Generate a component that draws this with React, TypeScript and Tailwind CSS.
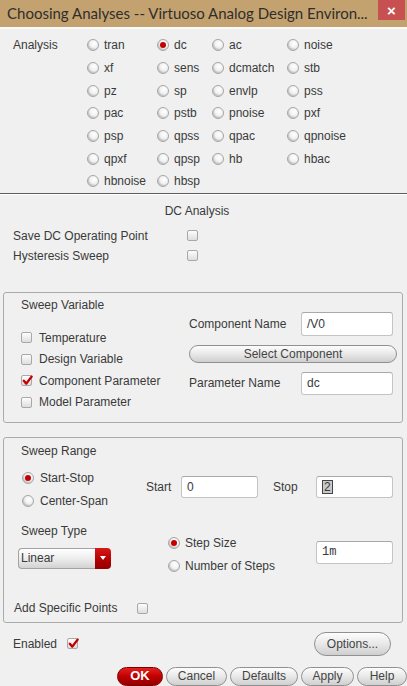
import React from 'react'

const analyses = [
  ['tran', 'dc', 'ac', 'noise'],
  ['xf', 'sens', 'dcmatch', 'stb'],
  ['pz', 'sp', 'envlp', 'pss'],
  ['pac', 'pstb', 'pnoise', 'pxf'],
  ['psp', 'qpss', 'qpac', 'qpnoise'],
  ['qpxf', 'qpsp', 'hb', 'hbac'],
  ['hbnoise', 'hbsp'],
]

function Radio({ on }: { on?: boolean }) {
  return (
    <span className="flex h-[12px] w-[12px] shrink-0 items-center justify-center rounded-full border border-[#a6a6a6] bg-[radial-gradient(circle_at_60%_35%,#ffffff_0%,#f1f1f1_45%,#c8c8c8_100%)] shadow-[inset_1px_-1px_1px_rgba(0,0,0,0.12)]">
      {on && <span className="h-[6px] w-[6px] rounded-full bg-[#c30000]" />}
    </span>
  )
}

function Check({ on }: { on?: boolean }) {
  return (
    <span className="relative flex h-[11px] w-[11px] shrink-0 items-center justify-center rounded-[2px] border border-[#a8a8a8] bg-[linear-gradient(#fdfdfd,#dedede)]">
      {on && (
        <svg width="11" height="11" viewBox="0 0 11 11" className="absolute left-[0px] top-[-1px]">
          <path d="M1.8 5.8 L4.3 8.6 L9.6 1.6" fill="none" stroke="#c40000" strokeWidth="2.4" strokeLinecap="round" strokeLinejoin="round" />
        </svg>
      )}
    </span>
  )
}

function Field({ w, h, children, mono }: { w: string; h: string; children?: React.ReactNode; mono?: boolean }) {
  return (
    <div className={`${w} ${h} flex items-center rounded-[3px] border border-[#c4c4c4] border-t-[#a9a9a9] bg-white pl-[5px] ${mono ? "font-['Liberation_Mono',monospace] text-[12px]" : ''}`}>
      {children}
    </div>
  )
}

function Pill({ w, h, children }: { w: string; h: string; children: React.ReactNode }) {
  return (
    <div className={`${w} ${h} flex items-center justify-center rounded-full border border-[#909090] bg-[linear-gradient(#fdfdfd,#e8e8e8_50%,#cfcfcf)] text-[12px] text-[#444]`}>
      {children}
    </div>
  )
}

export default function App() {
  return (
    <div className="h-[686px] w-[407px] overflow-hidden bg-[#f0f0f0] font-['Liberation_Sans',Arial,sans-serif] text-[12px] leading-[18px] text-[#3a3a3a]">
      {/* title bar */}
      <div className="flex h-[27px] items-start justify-between bg-[#c4a26f]">
        <div className="whitespace-nowrap pl-[7px] pt-[3px] font-['Lato',sans-serif] text-[15px] leading-[20px] text-[#2e2e2e]">
          Choosing Analyses -- Virtuoso Analog Design Environ...
        </div>
        <div className="mr-[2px] flex h-[20px] w-[27px] shrink-0 items-center justify-center bg-[#c75050] text-[15px] font-bold leading-none text-white">
          ×
        </div>
      </div>
      <div className="h-[2px] bg-[#fafafa]" />

      {/* analysis choices */}
      <div className="flex border-b border-[#5f5f5f] pt-[5px]">
        <div className="w-[87px] pl-[13px] leading-[22.7px]">Analysis</div>
        <div className="grid grid-cols-[70px_55px_75px_1fr]">
          {analyses.flatMap((row, r) =>
            row.map((a) => (
              <div key={r + a} className="flex h-[22.7px] items-center gap-[5px]">
                <Radio on={a === 'dc'} />
                <span>{a}</span>
              </div>
            ))
          )}
        </div>
      </div>
      <div className="h-px bg-white" />

      {/* DC analysis options */}
      <div className="mt-[7px] flex h-[18px] items-center justify-center pr-[13px]">DC Analysis</div>
      <div className="mt-[6px] pl-[13px]">
        <div className="flex h-[20px] items-center">
          <span className="w-[174px]">Save DC Operating Point</span>
          <Check />
        </div>
        <div className="flex h-[20px] items-center">
          <span className="w-[174px]">Hysteresis Sweep</span>
          <Check />
        </div>
      </div>

      {/* sweep variable */}
      <div className="ml-[3px] mt-[26px] flex h-[131px] w-[400px] rounded-[3px] border border-[#ababab]">
        <div className="w-[185px] pl-[17px]">
          <div className="mt-[3px] h-[18px]">Sweep Variable</div>
          <div className="mt-[13px]">
            {['Temperature', 'Design Variable', 'Component Parameter', 'Model Parameter'].map((t) => (
              <div key={t} className="flex h-[21.5px] items-center gap-[7px]">
                <Check on={t === 'Component Parameter'} />
                <span>{t}</span>
              </div>
            ))}
          </div>
        </div>
        <div className="pt-[19px]">
          <div className="flex items-center">
            <span className="w-[112px]">Component Name</span>
            <Field w="w-[92px]" h="h-[24px]">/V0</Field>
          </div>
          <div className="mt-[9px]">
            <Pill w="w-[208px]" h="h-[18px]">Select Component</Pill>
          </div>
          <div className="mt-[9px] flex items-center">
            <span className="w-[112px]">Parameter Name</span>
            <Field w="w-[92px]" h="h-[23px]">dc</Field>
          </div>
        </div>
      </div>

      {/* sweep range */}
      <div className="ml-[3px] mt-[14px] h-[186px] w-[400px] rounded-[3px] border border-[#ababab]">
        <div className="mt-[4px] h-[18px] pl-[17px]">Sweep Range</div>
        <div className="mt-[7px] flex">
          <div className="w-[142px] pl-[18px]">
            <div className="flex h-[23px] items-center gap-[6px]">
              <Radio on />
              <span>Start-Stop</span>
            </div>
            <div className="flex h-[23px] items-center gap-[6px]">
              <Radio />
              <span>Center-Span</span>
            </div>
          </div>
          <div className="mt-[9px] flex h-[22px] items-center">
            <span className="w-[35px]">Start</span>
            <Field w="w-[77px]" h="h-[22px]">0</Field>
            <span className="ml-[15px] w-[43px]">Stop</span>
            <Field w="w-[77px]" h="h-[22px]">
              <span className="border border-[#444] bg-[#c9c9c9] px-[1px] leading-[12px]">2</span>
            </Field>
          </div>
        </div>
        <div className="mt-[9px] flex">
          <div className="w-[164px] pl-[14px]">
            <div className="h-[18px] pl-[3px]">Sweep Type</div>
            <div className="mt-[8px] flex h-[21px] w-[93px]">
              <div className="flex flex-1 items-center rounded-l-[4px] border border-r-0 border-[#a3a3a3] bg-[linear-gradient(#ffffff,#ebebeb_55%,#d2d2d2)] pl-[2px]">Linear</div>
              <div className="flex w-[16px] items-center justify-center rounded-r-[4px] bg-[linear-gradient(#d81818,#b00000_60%,#900000)]">
                <span className="h-0 w-0 border-x-[3.5px] border-t-[4px] border-x-transparent border-t-white" />
              </div>
            </div>
          </div>
          <div className="w-[148px] pt-[9.5px]">
            <div className="flex h-[23px] items-center gap-[5px]">
              <Radio on />
              <span>Step Size</span>
            </div>
            <div className="flex h-[23px] items-center gap-[5px]">
              <Radio />
              <span>Number of Steps</span>
            </div>
          </div>
          <div className="mt-[19px]">
            <Field w="w-[77px]" h="h-[23px]" mono>1m</Field>
          </div>
        </div>
        <div className="mt-[22px] flex h-[18px] items-center pl-[10px]">
          <span className="w-[123px]">Add Specific Points</span>
          <Check />
        </div>
      </div>

      {/* footer */}
      <div className="mt-[9px] flex items-center justify-between pl-[13px] pr-[16px]">
        <div className="flex items-center gap-[10px]">
          <span>Enabled</span>
          <Check on />
        </div>
        <Pill w="w-[77px]" h="h-[24px]">Options...</Pill>
      </div>
      <div className="mt-[11px] flex gap-[3px] pl-[117px]">
        <div className="flex h-[19px] w-[46px] items-center justify-center rounded-full border border-[#7a0000] bg-[linear-gradient(#e42020,#c00000_50%,#960000)] text-[13px] font-bold text-white">
          OK
        </div>
        <Pill w="w-[61px]" h="h-[19px]">Cancel</Pill>
        <Pill w="w-[68px]" h="h-[19px]">Defaults</Pill>
        <Pill w="w-[53px]" h="h-[19px]">Apply</Pill>
        <Pill w="w-[50px]" h="h-[19px]">Help</Pill>
      </div>
    </div>
  )
}
